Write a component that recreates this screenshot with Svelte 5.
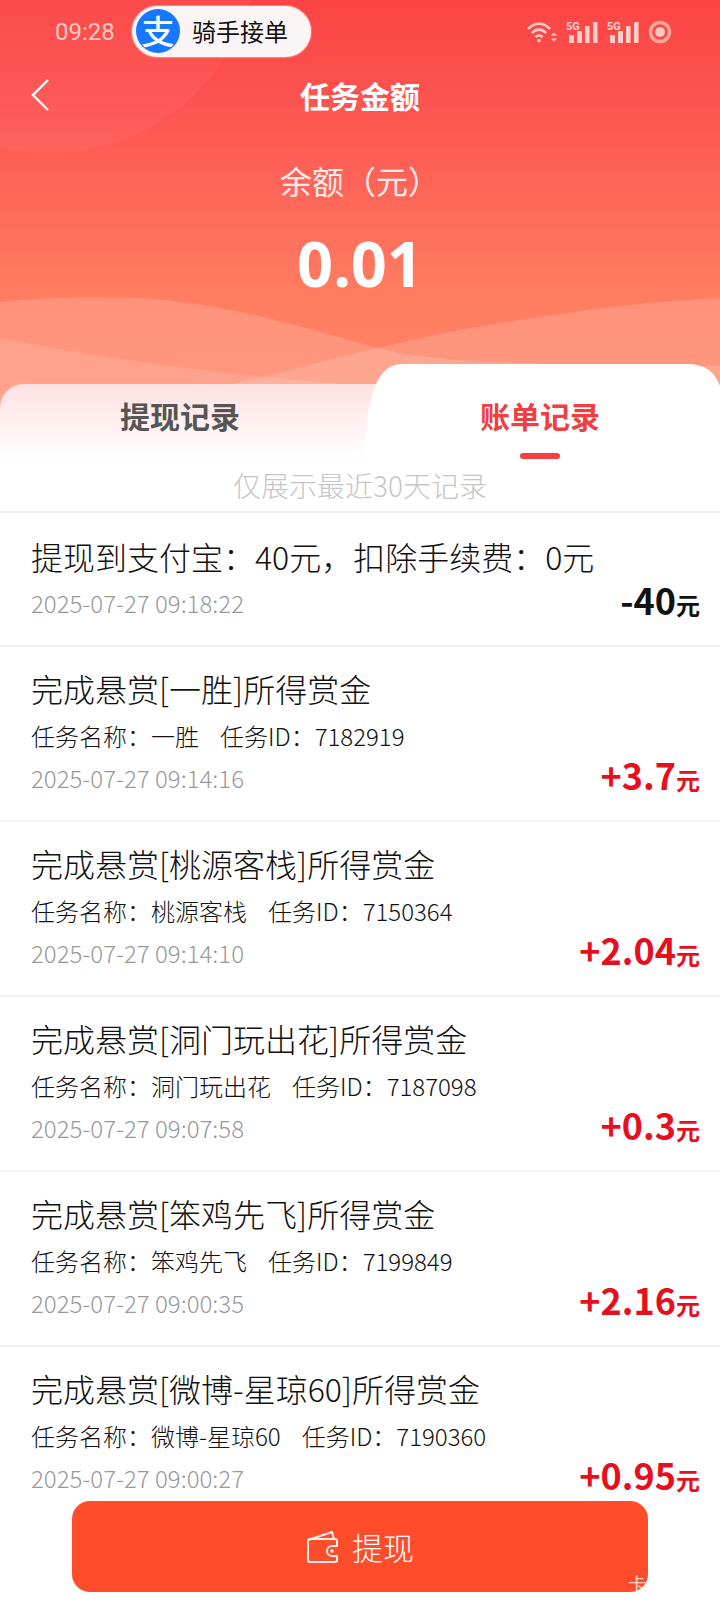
<script lang="ts">
  interface Bill {
    title: string;
    task?: string;
    id?: string;
    time: string;
    amount: string;
  }

  const bills: Bill[] = [
    { title: '提现到支付宝：40元，扣除手续费：0元', time: '2025-07-27 09:18:22', amount: '-40' },
    { title: '完成悬赏[一胜]所得赏金', task: '一胜', id: '7182919', time: '2025-07-27 09:14:16', amount: '+3.7' },
    { title: '完成悬赏[桃源客栈]所得赏金', task: '桃源客栈', id: '7150364', time: '2025-07-27 09:14:10', amount: '+2.04' },
    { title: '完成悬赏[洞门玩出花]所得赏金', task: '洞门玩出花', id: '7187098', time: '2025-07-27 09:07:58', amount: '+0.3' },
    { title: '完成悬赏[笨鸡先飞]所得赏金', task: '笨鸡先飞', id: '7199849', time: '2025-07-27 09:00:35', amount: '+2.16' },
    { title: '完成悬赏[微博-星琼60]所得赏金', task: '微博-星琼60', id: '7190360', time: '2025-07-27 09:00:27', amount: '+0.95' }
  ];
</script>

<div class="page">
  <header class="hero">
    <svg class="waves" viewBox="0 0 720 430" preserveAspectRatio="none" aria-hidden="true">
      <circle cx="50" cy="-55" r="208" fill="#fff" opacity="0.035" />
      <path d="M0 302 C60 296 150 292 230 310 C290 322 340 338 385 350 C440 362 500 364 720 366 V430 H0 Z" fill="#fff" opacity="0.16" />
      <path d="M720 298 C640 302 560 312 450 332 C400 342 320 362 230 385 L120 430 H720 Z" fill="#fff" opacity="0.16" />
      <path d="M0 338 C70 352 160 366 240 374 C300 382 350 384 420 390 V430 H0 Z" fill="#fff" opacity="0.12" />
    </svg>

    <div class="status">
      <span class="clock">09:28</span>
      <div class="pill">
        <span class="logo">支</span>
        <span class="pill-text">骑手接单</span>
      </div>
      <div class="status-icons">
        <svg width="30" height="24" viewBox="0 0 30 24" fill="none" stroke="#ffd0c9" stroke-width="2.6" aria-hidden="true">
          <path d="M1 9 C7 2 17 2 23 9" />
          <path d="M5 13 C9 8.500 15 8.500 19 13" />
          <path d="M8.500 17 C10.500 15 13.500 15 15.500 17" />
          <circle cx="12" cy="20.500" r="1.800" fill="#ffd0c9" stroke="none" />
          <path d="M24 15.500 L27 12.500 L30 15.500 Z M24 18.500 L27 21.500 L30 18.500 Z" fill="#ffd0c9" stroke="none" />
        </svg>
        {#each [0, 1] as n (n)}
          <svg width="32" height="24" viewBox="0 0 32 24" fill="#ffd0c9" aria-hidden="true">
            <text x="0" y="10" font-size="11" font-weight="700" font-family="Roboto, sans-serif">5G</text>
            <rect x="3" y="15" width="5" height="8" rx="0.500" />
            <rect x="11" y="11" width="5" height="12" rx="0.500" />
            <rect x="19" y="6" width="4.500" height="17" rx="0.500" />
            <rect x="27" y="2" width="4.500" height="21" rx="0.500" />
          </svg>
        {/each}
        <svg width="24" height="24" viewBox="0 0 24 24" aria-hidden="true">
          <circle cx="12" cy="12" r="9.500" fill="none" stroke="#ffa79b" stroke-width="3.500" />
          <circle cx="12" cy="12" r="5" fill="#ffc9c1" />
        </svg>
      </div>
    </div>

    <div class="nav">
      <svg class="back" width="20" height="34" viewBox="0 0 20 34" fill="none" stroke="#fff" stroke-width="2.400" aria-hidden="true">
        <path d="M18 2 L3 17 L18 32" />
      </svg>
      <h1>任务金额</h1>
    </div>

    <div class="balance-label">余额（元）</div>
    <div class="balance">0.01</div>
  </header>

  <div class="tabs">
    <div class="tab tab-off"><span>提现记录</span></div>
    <div class="tab tab-on">
      <span>账单记录</span>
      <i class="underline"></i>
    </div>
  </div>

  <div class="notice">仅展示最近30天记录</div>

  <ul class="list">
    {#each bills as b (b.time)}
      <li class="row">
        <div class="title">{b.title}</div>
        {#if b.task}
          <div class="sub"><span>任务名称：{b.task}</span><span>任务ID：{b.id}</span></div>
        {/if}
        <div class="foot">
          <span class="time">{b.time}</span>
          <span class="amount" class:plus={b.amount.startsWith('+')}>{b.amount}<small>元</small></span>
        </div>
      </li>
    {/each}
  </ul>

  <button class="withdraw" type="button">
    <svg width="34" height="32" viewBox="0 0 34 32" fill="none" stroke="#ffeee8" stroke-width="2" aria-hidden="true">
      <path d="M2 9 L26 1 L28 8" />
      <path d="M31 15 V10 Q31 8 29 8 H4 Q2 8 2 10 V29 Q2 31 4 31 H29 Q31 31 31 29 V25" />
      <path d="M32 15 H26 A5 5 0 0 0 26 25 H32" />
      <circle cx="26" cy="20" r="1.800" fill="#ffeee8" stroke="none" />
    </svg>
    <span>提现</span>
  </button>
  <span class="mark">卡</span>
</div>

<style>
  :global(body) {
    margin: 0;
    background: #fff;
  }

  .page {
    position: relative;
    width: 720px;
    height: 1612px;
    overflow: hidden;
    background: #fff;
    font-family: "Noto Sans CJK SC", "Noto Sans", sans-serif;
    color: #222;
  }

  .hero {
    position: relative;
    height: 420px;
    background: linear-gradient(180deg, #fb4444 0%, #fd5451 25%, #ff7e62 72%, #ff8467 100%);
    color: #fff;
    text-align: center;
  }

  .waves {
    position: absolute;
    left: 0;
    top: 0;
    width: 720px;
    height: 430px;
  }

  .status {
    position: relative;
    display: flex;
    align-items: center;
    height: 64px;
    padding: 0 48px 0 55px;
  }

  .clock {
    font: 400 24px/1 Roboto, sans-serif;
    color: #ffc9c2;
    width: 77px;
    text-align: left;
  }

  .pill {
    display: flex;
    align-items: center;
    width: 179px;
    height: 51px;
    box-sizing: border-box;
    padding-left: 4px;
    border-radius: 26px;
    background: #faf5f5;
    box-shadow: 0 0 0 1px rgba(255, 255, 255, 0.3);
    margin-top: -2px;
  }

  .logo {
    width: 44px;
    height: 44px;
    border-radius: 50%;
    background: #1677ff;
    color: #fff;
    font-size: 33px;
    font-weight: 500;
    line-height: 42px;
    text-align: center;
  }

  .pill-text {
    margin-left: 12px;
    font-size: 24px;
    color: #111;
    line-height: 1;
  }

  .status-icons {
    display: flex;
    align-items: center;
    gap: 9px;
    margin-left: auto;
  }

  .nav {
    position: relative;
    height: 62px;
    display: flex;
    align-items: center;
    justify-content: center;
  }

  .back {
    position: absolute;
    left: 30px;
    top: 14px;
  }

  h1 {
    margin: 0;
    font-size: 30px;
    font-weight: 700;
    line-height: 1;
  }

  .balance-label {
    position: relative;
    margin-top: 34px;
    font-size: 32px;
    line-height: 1.3;
    color: rgba(255, 255, 255, 0.88);
  }

  .balance {
    position: relative;
    margin-top: 23px;
    font: 700 63px/1.2 "Noto Sans", sans-serif;
  }

  .tabs {
    position: relative;
    display: flex;
    align-items: flex-end;
    height: 96px;
    margin-top: -56px;
  }

  .tab {
    display: flex;
    flex-direction: column;
    align-items: center;
    font-size: 30px;
    font-weight: 700;
    line-height: 1;
  }

  .tab-off {
    width: 380px;
    height: 76px;
    margin-right: -20px;
    padding: 16px 20px 0 0;
    box-sizing: border-box;
    border-radius: 24px 0 0 0;
    background: linear-gradient(180deg, #ffe1e1 0%, #fff 100%);
    color: #555;
  }

  .tab-on {
    position: relative;
    width: 360px;
    height: 96px;
    padding-top: 36px;
    box-sizing: border-box;
    background: #fff;
    color: #ee3f43;
    clip-path: path("M3 96 C7 60 8 0 42 0 H328 Q352 0 360 22 V96 Z");
  }

  .underline {
    width: 40px;
    height: 6px;
    margin-top: 23px;
    border-radius: 3px;
    background: #f5403f;
  }

  .notice {
    height: 51px;
    font-size: 28px;
    line-height: 51px;
    text-align: center;
    color: #c6c6c6;
    font-weight: 300;
  }

  .list {
    list-style: none;
    margin: 0;
    padding: 0;
  }

  .row {
    padding: 19px 20px 0 31px;
    height: 175px;
    box-sizing: border-box;
    border-top: 2px solid #f1f1f1;
  }

  .row:first-child {
    height: 134px;
    padding-top: 21px;
  }

  .title {
    font-size: 32px;
    line-height: 44px;
    font-weight: 300;
    color: #111;
    white-space: nowrap;
  }

  .sub {
    display: flex;
    gap: 21px;
    margin-top: 9px;
    font-size: 24px;
    line-height: 34px;
    font-weight: 300;
    color: #111;
  }

  .foot {
    display: flex;
    justify-content: space-between;
    align-items: center;
    margin-top: 6px;
    height: 36px;
  }

  .time {
    font-size: 24px;
    font-weight: 300;
    color: #999;
  }

  .amount {
    font-size: 36px;
    font-weight: 700;
    line-height: 1;
    color: #111;
    margin-top: -6px;
  }

  .amount.plus {
    color: #e60f1e;
  }

  .amount small {
    font-size: 24px;
    font-weight: 700;
  }

  .withdraw {
    position: absolute;
    left: 72px;
    top: 1501px;
    width: 576px;
    height: 91px;
    display: flex;
    align-items: center;
    justify-content: center;
    gap: 12px;
    border: none;
    border-radius: 18px;
    background: #ff4d2b;
    color: #fff;
    font-family: inherit;
    font-size: 31px;
    font-weight: 300;
  }

  .mark {
    position: absolute;
    left: 628px;
    top: 1571px;
    font-size: 18px;
    line-height: 24px;
    color: rgba(255, 255, 255, 0.75);
  }
</style>
